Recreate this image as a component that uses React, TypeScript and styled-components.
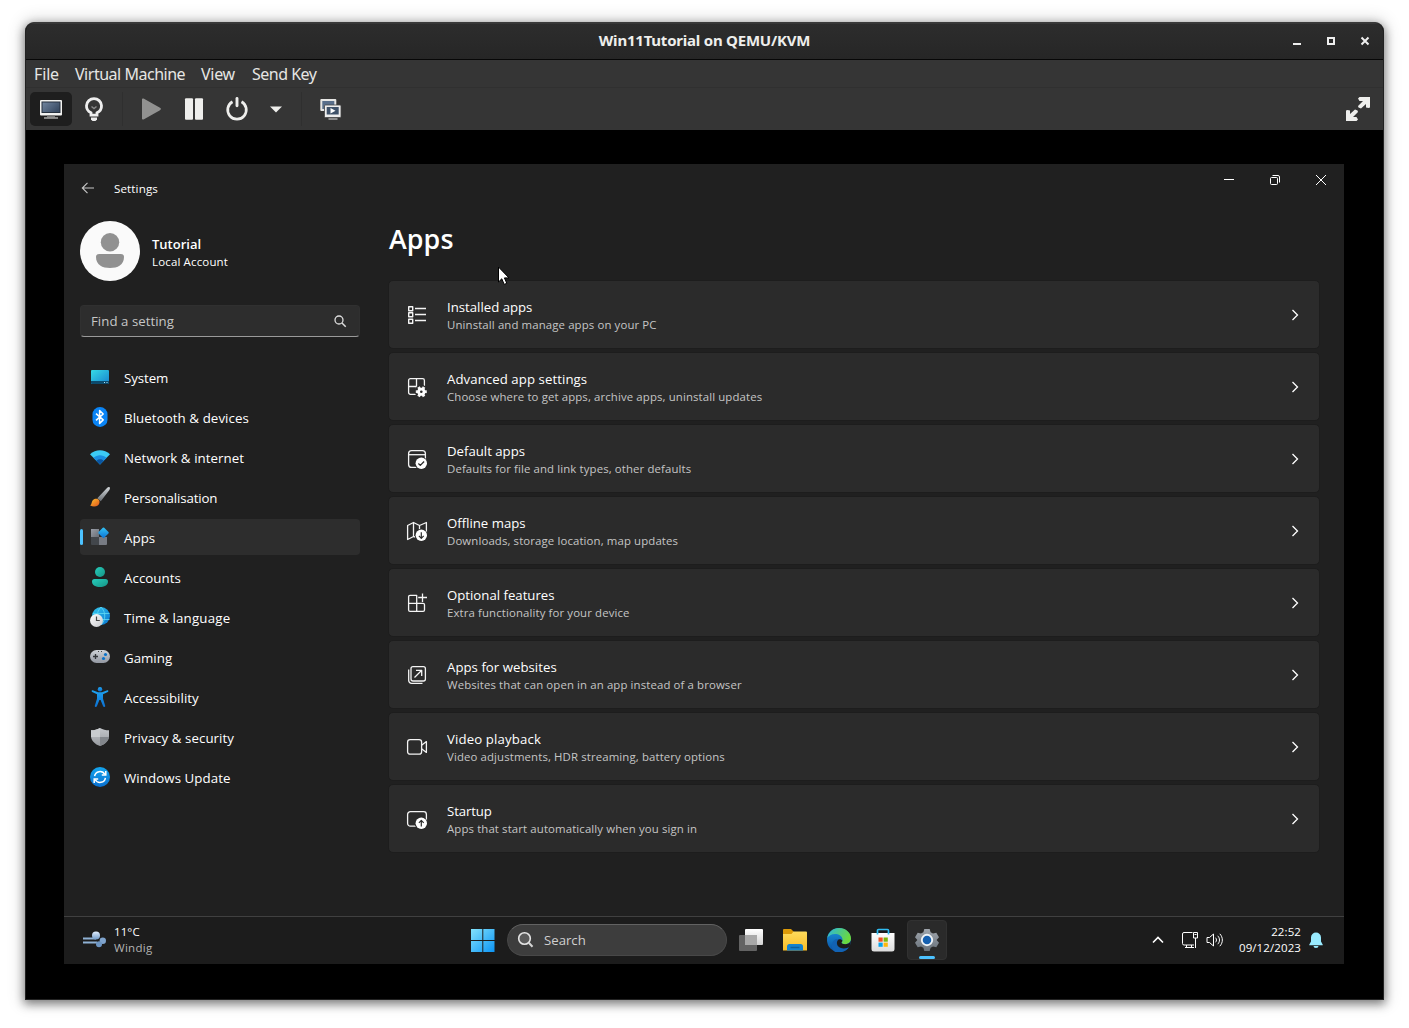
import React from 'react';
import styled, { createGlobalStyle } from 'styled-components';

const Global = createGlobalStyle`
  * { box-sizing: border-box; }
  body { margin: 0; background: #fff; overflow: hidden; font-family: 'Open Sans', 'Noto Sans', sans-serif; }
  svg { display: block; flex: none; }
`;

/* ---------- host window ---------- */
const Desktop = styled.div`
  width: 1409px; height: 1028px; padding: 22px 25px 28px; background: #fff;
`;
const HostWindow = styled.div`
  width: 1359px; height: 978px; display: flex; flex-direction: column;
  border: 1px solid #222; border-top-color: #3a3a3a; border-radius: 9px 9px 0 0;
  background: #000; overflow: hidden;
  box-shadow: 0 3px 10px 1px rgba(0,0,0,.46), 0 0 16px 4px rgba(0,0,0,.12);
`;
const TitleBar = styled.div`
  height: 37px; flex: none; display: grid; grid-template-columns: 1fr auto 1fr; align-items: center;
  background: linear-gradient(#2d2d2d, #262626); border-bottom: 1px solid #070707;
  box-shadow: inset 0 1px #383838;
`;
const HostTitle = styled.div`
  grid-column: 2; color: #eeeeec; font: 700 15px/20px 'Noto Sans', sans-serif; letter-spacing: -0.22px; padding-bottom: 2px;
`;
const HostControls = styled.div`
  display: flex; justify-content: flex-end; gap: 10px; padding-right: 6px;
`;
const MenuBar = styled.div`
  height: 28px; flex: none; display: flex; align-items: center; gap: 16px; padding-left: 8px;
  background: #353535; border-bottom: 1px solid #303030;
`;
const MenuItem = styled.span<{ $w: number; $ls: number }>`
  width: ${p => p.$w}px; white-space: nowrap; color: #e6e6e4; font: 400 16px/22px 'Noto Sans', sans-serif;
  letter-spacing: ${p => p.$ls}px;
`;
const ToolBar = styled.div`
  height: 42px; flex: none; display: flex; align-items: center; padding: 0 5px 0 4px; gap: 1px; background: #353535;
`;
const Tool = styled.div<{ $active?: boolean; $w?: number }>`
  width: ${p => p.$w ?? 42}px; height: 34px; border-radius: 5px; display: grid; place-items: center;
  background: ${p => (p.$active ? '#1e1e1e' : 'transparent')};
`;
const ToolDivider = styled.div<{ $m?: number }>`
  width: 1px; height: 34px; background: #2f2f2f; margin: 0 6px 0 ${p => p.$m ?? 6}px;
`;
const Spacer = styled.div`flex: 1;`;
const Stage = styled.div`flex: 1; padding: 34px 38px; background: #000;`;

/* ---------- guest desktop ---------- */
const Guest = styled.div`
  position: relative; width: 1280px; height: 800px; display: flex; flex-direction: column; background: #202020; color: #fff;
`;
const SettingsBar = styled.div`
  height: 48px; flex: none; display: flex; align-items: flex-start; padding-left: 16px;
`;
const BackSlot = styled.div`width: 16px; height: 48px; display: grid; place-items: center;`;
const SettingsTitle = styled.div`font-size: 11.6px; line-height: 50px; padding-left: 18px; letter-spacing: 0.12px;`;
const CaptionButton = styled.div`width: 46px; height: 32px; display: grid; place-items: center;`;
const SettingsBody = styled.div`flex: 1; display: flex; padding: 9px 24px 0 16px;`;
const Sidebar = styled.div`width: 280px; flex: none;`;
const Profile = styled.div`display: flex; align-items: center; gap: 12px; height: 60px;`;
const Name = styled.div`font-size: 13px; font-weight: 600; line-height: 19px; padding-top: 2px;`;
const Account = styled.div`font-size: 11.5px; line-height: 16px; letter-spacing: 0.15px;`;
const SearchBox = styled.div`
  height: 32px; margin: 24px 0 22px; padding: 0 12px 0 10px; display: flex; align-items: center; justify-content: space-between;
  border-radius: 4px; background: #2d2d2d; border: 1px solid #303030; border-bottom-color: #9a9a9a;
  font-size: 13.2px; color: #c6c6c6; letter-spacing: 0.06px;
`;
const Nav = styled.div`display: flex; flex-direction: column; gap: 4px;`;
const NavItem = styled.div<{ $active?: boolean }>`
  height: 36px; border-radius: 4px; display: flex; align-items: center; padding-left: 10px; gap: 14px;
  background: ${p => (p.$active ? '#2d2d2d' : 'transparent')};
  ${p => p.$active && `
    &::before { content: ''; width: 3px; height: 16px; border-radius: 2px; background: #4cc2ff; margin: 0 -7px 0 -10px; }
  `}
`;
const NavLabel = styled.span<{ $ls?: number }>`
  font-size: 13.3px; line-height: 20px; padding-top: 2px; white-space: nowrap; letter-spacing: ${p => p.$ls ?? 0}px;
`;
const NavIcon = styled.div`width: 20px; height: 20px;`;
const Content = styled.div`flex: 1; padding-left: 28px;`;
const PageTitle = styled.div`font-size: 26.8px; font-weight: 600; line-height: 36px; margin: 0 0 23px 1px; letter-spacing: 0.1px;`;
const Cards = styled.div`display: flex; flex-direction: column; gap: 3px;`;
const Card = styled.div`
  height: 69px; display: flex; align-items: center; padding: 0 18px 0 16px; border: 1px solid #1d1d1d; border-radius: 5px;
  background: #2b2b2b;
`;
const CardText = styled.div`flex: 1; padding: 2px 0 0 18px;`;
const CardTitle = styled.div<{ $ls?: number }>`font-size: 13.2px; line-height: 18px; letter-spacing: ${p => p.$ls ? `${p.$ls}px` : 'normal'};`;
const CardSub = styled.div`font-size: 11.4px; line-height: 17px; color: #c5c5c5; letter-spacing: 0.12px;`;
const Pointer = styled.div`position: absolute; left: 433px; top: 102px;`;

/* ---------- taskbar ---------- */
const TaskBar = styled.div`
  height: 48px; flex: none; display: grid; grid-template-columns: 399px auto 1fr; align-items: center;
  background: #1c1c1c; border-top: 1px solid #404040; padding-bottom: 1px;
`;
const Weather = styled.div`display: flex; align-items: center; gap: 8px; padding-left: 18px;`;
const WeatherIcon = styled.div`margin-top: -2px;`;
const WeatherText = styled.div`font-size: 11.5px; line-height: 16px; letter-spacing: 0.1px;`;
const Dim = styled.div`color: #b4b4b4; letter-spacing: 0.3px;`;
const TaskGroup = styled.div`display: flex; gap: 4px; align-items: center;`;
const TaskButton = styled.div<{ $active?: boolean }>`
  width: 40px; height: 40px; border-radius: 4px; display: flex; flex-direction: column; align-items: center; justify-content: center;
  ${p => p.$active && `
    background: #2a2a2a; border: 1px solid #313131; padding-top: 7px;
    &::after { content: ''; width: 16px; height: 3px; border-radius: 2px; background: #4cc2ff; margin-top: 4px; }
  `}
`;
const TaskSearch = styled.div`
  width: 220px; height: 32px; border-radius: 16px; display: flex; align-items: center; gap: 9px; padding-left: 9px;
  background: #3d3d3d; border: 1px solid #484848; border-top-color: #626262; color: #cfcfcf; font-size: 13.2px;
`;
const Tray = styled.div`display: flex; align-items: center; justify-content: flex-end; padding-right: 21px;`;
const TrayIcon = styled.div<{ $mr: number }>`margin-right: ${p => p.$mr}px;`;
const Clock = styled.div`text-align: right; font-size: 11.5px; line-height: 16px; letter-spacing: 0.1px;`;

/* ---------- icons ---------- */
const Box = ({ s = 20, w, h, children }: { s?: number; w?: number; h?: number; children: React.ReactNode }) => (
  <svg width={w ?? s} height={h ?? s} viewBox={`0 0 ${w ?? s} ${h ?? s}`} fill="none">{children}</svg>
);
const Grad = ({ id, a, b, x2 = 1, y2 = 1 }: { id: string; a: string; b: string; x2?: number; y2?: number }) => (
  <linearGradient id={id} x1="0" y1="0" x2={x2} y2={y2}><stop stopColor={a} /><stop offset="1" stopColor={b} /></linearGradient>
);

const navIcons: Record<string, React.ReactNode> = {
  System: <><Grad id="sy" a="#36dbe6" b="#1783cf" /><rect x="1" y="3" width="18" height="14" rx="1" fill="url(#sy)" /><path d="M1 14h18v2a1 1 0 0 1-1 1H2a1 1 0 0 1-1-1z" fill="#0c4a6c" /><path d="M14 15.5h1M16.500 15.500h1" stroke="#aee6ff" /></>,
  Bluetooth: <><rect x="2.500" width="15" height="20" rx="7.300" fill="#0a84f5" /><path d="m6 6.600 7.200 6.300-3.600 3.600V3.500l3.600 3.500L6 13.400" stroke="#fff" strokeWidth="1.500" strokeLinejoin="round" /></>,
  Network: <><path d="M0 7.300C5.500 2 14.500 2 20 7.300L10 17.500z" fill="#3ccbf4" /><path d="M3.400 10.700c3.700-3.400 9.500-3.400 13.200 0L10 17.500z" fill="#1a8fe0" /><path d="M6.300 13.700c2.200-1.900 5.200-1.900 7.400 0L10 17.500z" fill="#0b55a0" /></>,
  Personalisation: <><Grad id="p1" a="#d3d7da" b="#6b7075" x2={0} /><Grad id="p2" a="#ffc32e" b="#e0531b" /><path d="M19.600.3c.7.6.3 1.800-.4 2.900l-8.400 11.100-3.500-3.100L17 1c.9-.9 2-1.300 2.600-.7z" fill="url(#p1)" /><path d="M3 13c1.800-1.800 4.600-1.600 5.800-.2 1.300 1.600.9 4.300-1 5.700C5.600 20 2.500 20 0 18.300c2-.7 1.300-3.600 3-5.300z" fill="url(#p2)" /></>,
  Apps: <><Grad id="a1" a="#9a9fa8" b="#686c74" /><Grad id="a2" a="#34c5f5" b="#0b70d2" /><path d="M1 2h8v8H1z" fill="url(#a1)" /><path d="M1 10h8v8H2a1 1 0 0 1-1-1z" fill="#42464b" /><path d="M9 10h8v7a1 1 0 0 1-1 1H9z" fill="#777b83" /><rect x="9.500" y="1.800" width="8" height="8" rx="1" transform="rotate(45 13.500 5.800)" fill="url(#a2)" /></>,
  Accounts: <><Grad id="c1" a="#27cdbb" b="#159486" /><circle cx="10" cy="5" r="5" fill="url(#c1)" /><path d="M4.500 12h11a2.500 2.500 0 0 1 2.500 2.500C18 18.500 14 20 10 20s-8-1.500-8-5.500A2.500 2.500 0 0 1 4.500 12z" fill="url(#c1)" /></>,
  Time: <><Grad id="t1" a="#35c9ef" b="#0873cf" /><Grad id="t2" a="#fff" b="#c7c9cd" /><circle cx="11" cy="9" r="9" fill="url(#t1)" /><path d="M3 6.500h16.500M8 12.500h11.500M11 0c-5 5-5 13 0 18m0-18c5 5 5 13 0 18" stroke="#61dbf5" strokeWidth=".8" /><circle cx="6.500" cy="13.500" r="6.500" fill="url(#t2)" /><path d="M6.500 9.500v4h3.300" stroke="#444" strokeWidth="1.200" /></>,
  Gaming: <><Grad id="g1" a="#cfd3d9" b="#9297a1" x2={0} /><rect y="3" width="20" height="13" rx="6.500" fill="url(#g1)" /><path d="M5.500 7v5M3 9.500h5" stroke="#33363b" strokeWidth="1.300" /><circle cx="15.500" cy="7.500" r="1.600" fill="#0a72c9" /><circle cx="13.500" cy="11.500" r="1.600" fill="#0a72c9" /><path d="M8 4.500h1M11 4.500h1" stroke="#444" /></>,
  Accessibility: <><Grad id="ac" a="#1fa5f2" b="#0c6fd0" x2={0} /><circle cx="10" cy="2.300" r="2.200" fill="url(#ac)" /><path d="M2.700 3.200 8 5.200h4l5.300-2c1.200-.3 1.500 1.400.5 1.900L13 7.300v4.400l2.200 7c.3 1.300-1.600 1.800-2.100.6L10.600 13H9.400l-2.500 6.300c-.5 1.200-2.400.7-2.100-.6l2.200-7V7.300L2.200 5.100c-1-.5-.7-2.200.5-1.900z" fill="url(#ac)" /></>,
  Privacy: <><Grad id="s1" a="#c3c6ca" b="#989ba0" x2={0} /><path d="M10 1c2.800 1.700 5.800 2.200 9 2.300V9c0 4.700-4 8.300-9 10C5 17.300 1 13.700 1 9V3.300C4.200 3.200 7.200 2.700 10 1z" fill="url(#s1)" /><path d="M10 1v9H1V3.300C4.200 3.200 7.200 2.700 10 1z" fill="#c9cccf" /><path d="M10 10h9c-.5 4.300-4.300 7.500-9 9z" fill="#83878c" /></>,
  Update: <><Grad id="u1" a="#14a5ee" b="#0a70d0" x2={0} /><circle cx="10" cy="10" r="10" fill="url(#u1)" /><path d="M4.600 9.200c.7-5.300 7.700-6.300 10.300-1.700M15.400 10.800c-.7 5.300-7.700 6.300-10.300 1.700" stroke="#fff" strokeWidth="1.500" /><path d="M15.800 4v4h-4M4.200 16v-4h4" stroke="#fff" strokeWidth="1.500" /></>,
};

const navData: [string, string, number][] = [
  ['System', 'System', -0.1], ['Bluetooth', 'Bluetooth & devices', 0.07], ['Network', 'Network & internet', 0.06],
  ['Personalisation', 'Personalisation', -0.14], ['Apps', 'Apps', 0.05], ['Accounts', 'Accounts', 0.05],
  ['Time', 'Time & language', 0.2], ['Gaming', 'Gaming', 0], ['Accessibility', 'Accessibility', 0.04],
  ['Privacy', 'Privacy & security', 0.06], ['Update', 'Windows Update', 0.07],
];

const badge = <circle cx="16.300" cy="16.300" r="6.600" fill="#2b2b2b" stroke="none" />;
const disc = <circle cx="16.300" cy="16.300" r="5.700" fill="#fff" stroke="none" />;
const gearTeeth = [0, 60, 120].map(a => (
  <path key={a} d="M16.300 11.200v11" strokeWidth="2.800" transform={`rotate(${a + 30} 16.300 16.700)`} />
));
const cardIcons: React.ReactNode[] = [
  <><path d="M3.700 3.700h4v4h-4zM3.700 9.700h4v4h-4zM3.700 16.300h4v4h-4z" strokeWidth="1.400" /><path d="M10 5.500h11M10 11.500h11M10 17.500h11" strokeWidth="1.400" /></>,
  <><rect x="3.600" y="3.600" width="15.800" height="15.800" rx="1.800" /><path d="M11.500 3.600v8M3.600 11.500h8M11.500 11.500v8" />{badge}{gearTeeth}<circle cx="16.300" cy="16.700" r="4" fill="#fff" stroke="none" /><circle cx="16.300" cy="16.700" r="1.300" fill="#2b2b2b" stroke="none" /></>,
  <><rect x="3.600" y="3.600" width="16.800" height="16.800" rx="3" /><path d="M3.700 7.700h16.600" />{badge}{disc}<path d="m13.400 16.500 1.900 1.900 3.800-3.900" stroke="#2b2b2b" /></>,
  <><path d="m2.600 6.500 5.900-3 6 3 6.900-3V16l-6.900 3-6-1.500-5.900 3zM8.500 3.500v14M14.500 6.500v12" />{badge}{disc}<path d="M16.300 13.200v6M13.900 16.900l2.400 2.400 2.400-2.400" stroke="#2b2b2b" strokeWidth="1.200" /></>,
  <><path d="M11.700 12.300V4.300H5a1.400 1.400 0 0 0-1.400 1.400V19A1.400 1.400 0 0 0 5 20.300h13.100a1.400 1.400 0 0 0 1.400-1.400v-5.200a1.400 1.400 0 0 0-1.400-1.400zM3.600 12.300h8.100v8M17.500 2.400V11M13.200 6.500H22" /></>,
  <><rect x="6" y="3.600" width="14.400" height="14.400" rx="2" /><path d="M3.700 6.500v11a2.800 2.800 0 0 0 2.800 2.800h11M9.500 14.500l7-7M11 7.300h5.700V13" /></>,
  <><rect x="2.600" y="4.600" width="14" height="14.600" rx="2.500" /><path d="m16.600 10.200 4.800-3.600v10.800l-4.800-3.600" /></>,
  <><rect x="2.600" y="4.600" width="18.800" height="14.600" rx="2.800" />{badge}{disc}<path d="M16.300 19.500v-6M13.900 15.800l2.400-2.400 2.400 2.400" stroke="#2b2b2b" strokeWidth="1.200" /></>,
];
const cardData: [string, string, number][] = [
  ['Installed apps', 'Uninstall and manage apps on your PC', 0],
  ['Advanced app settings', 'Choose where to get apps, archive apps, uninstall updates', 0.08],
  ['Default apps', 'Defaults for file and link types, other defaults', 0],
  ['Offline maps', 'Downloads, storage location, map updates', 0],
  ['Optional features', 'Extra functionality for your device', 0],
  ['Apps for websites', 'Websites that can open in an app instead of a browser', 0.04],
  ['Video playback', 'Video adjustments, HDR streaming, battery options', 0.14],
  ['Startup', 'Apps that start automatically when you sign in', -0.1],
];

const HostChrome = () => (
  <>
    <TitleBar>
      <HostTitle>Win11Tutorial on QEMU/KVM</HostTitle>
      <HostControls>
        <Box s={24}><path d="M8 15h8" stroke="#eee" strokeWidth="2" /></Box>
        <Box s={24}><path d="M9 9h6v6H9z" stroke="#eee" strokeWidth="2" /></Box>
        <Box s={24}><path d="m8.500 8.500 7 7m0-7-7 7" stroke="#eee" strokeWidth="2" /></Box>
      </HostControls>
    </TitleBar>
    <MenuBar>
      <MenuItem $w={25} $ls={-0.15}>File</MenuItem>
      <MenuItem $w={110} $ls={-0.48}>Virtual Machine</MenuItem>
      <MenuItem $w={35} $ls={-0.3}>View</MenuItem>
      <MenuItem $w={66} $ls={-0.5}>Send Key</MenuItem>
    </MenuBar>
    <ToolBar>
      <Tool $active>
        <Box w={24} h={22}><Grad id="mon" a="#7286a0" b="#3a4c64" y2={0.6} /><rect x="1" y="2" width="22" height="15.500" rx="1" fill="#f2f2f0" /><rect x="3" y="4" width="18" height="10.500" fill="url(#mon)" stroke="#26313f" /><path d="M8 17.500h8v2H8z" fill="#777" /><path d="M5 20h14" stroke="#a9a9a7" strokeWidth="1.600" /></Box>
      </Tool>
      <Tool>
        <Box s={24}><path d="M9 18.200v-2.400c-3-1.500-4.700-3.800-4.500-7.200C4.800 4.600 8 1.700 12 1.700s7.200 2.900 7.500 6.900c.2 3.400-1.500 5.700-4.500 7.200v2.400z" stroke="#eee" strokeWidth="2.800" /><path d="m9.500 9.500 2.500 2 2.500-2" stroke="#888" strokeWidth="1.500" /><path d="M9 20.500h6v2l-1.500 1.500h-3L9 22.500z" fill="#eee" /></Box>
      </Tool>
      <ToolDivider />
      <Tool><Box s={24}><path d="M3 2.500C3 1.600 4 1.300 5 1.800l16 9c1.200.7 1.200 1.800 0 2.400l-16 9c-1 .5-2 .2-2-.7z" fill="#919190" /></Box></Tool>
      <Tool><Box s={24}><rect x="3" y="1.300" width="8" height="21.500" rx="1" fill="#eeeeec" /><rect x="13" y="1.300" width="8" height="21.500" rx="1" fill="#eeeeec" /></Box></Tool>
      <Tool><Box s={24}><path d="M7.500 4.700a9.300 9.300 0 1 0 9 0" stroke="#eeeeec" strokeWidth="2.700" /><path d="M12 1.500v7.300" stroke="#eeeeec" strokeWidth="2.900" strokeLinecap="round" /></Box></Tool>
      <Tool $w={34}><Box w={12} h={7}><path d="M0 .5h12l-6 6z" fill="#eeeeec" /></Box></Tool>
      <ToolDivider $m={7} />
      <Tool>
        <Box s={24}><rect x="2.300" y="2" width="16" height="12" rx="1" fill="#e6e6e4" /><rect x="4.300" y="4" width="12" height="8" fill="#596f8b" /><rect x="6.500" y="8" width="16.500" height="12.500" rx="1" fill="#eee" stroke="#444" strokeWidth=".8" /><rect x="8.700" y="10" width="12" height="7.500" fill="#3f5269" /><path d="m12.500 11 5 2.700-5 2.700z" fill="#fff" /><path d="M10.500 22h9" stroke="#aaa" strokeWidth="1.500" /></Box>
      </Tool>
      <Spacer />
      <Box w={40} h={24}><path d="M20 1.500 21.500 0H32v10.500L30.500 11l-2.500-.5V7l-5 4.500-2.500-1-.500-1.500 5-5h-3.500zM20 22.500 18.500 24H8V13.500l1.500-.5 2.500.5V17l5-4.500 2.500 1 .5 1.500-5 5h3.500z" fill="#eeeeec" /></Box>
    </ToolBar>
  </>
);

const Task = () => (
  <TaskBar>
    <Weather>
      <WeatherIcon><Box w={24} h={18}><Grad id="w1" a="#e3efff" b="#6f99c7" x2={0} /><path d="M1 8.500h13M1 12.500h14" stroke="#8fb1d4" strokeWidth="2" /><circle cx="14" cy="5.500" r="4" fill="url(#w1)" /><circle cx="20.800" cy="10.700" r="3.200" fill="#7fa3cc" /><circle cx="17" cy="14.300" r="3" fill="#6d95c2" /></Box></WeatherIcon>
      <WeatherText>11°C<Dim>Windig</Dim></WeatherText>
    </Weather>
    <TaskGroup>
      <TaskButton><Box s={24}><linearGradient id="win" gradientUnits="userSpaceOnUse" x1="0" y1="0" x2="24" y2="24"><stop stopColor="#86e4fb" /><stop offset="1" stopColor="#0a93f5" /></linearGradient><path d="M0 1h11.300v11H0zM12.300 1h11.200v11H12.300zM0 13h11.300v11H0zM12.300 13h11.200v11H12.300z" fill="url(#win)" /></Box></TaskButton>
      <TaskSearch><Box s={18}><circle cx="7.500" cy="7.500" r="5.800" fill="#5a5a5a" stroke="#e4e4e4" strokeWidth="1.600" /><path d="m11.800 11.800 3.700 4" stroke="#d5d5d5" strokeWidth="2" /></Box>Search</TaskSearch>
      <TaskButton><Box s={24}><Grad id="v1" a="#fff" b="#d2d2d2" x2={0} /><rect x="6" y="1" width="18" height="16" rx="1" fill="url(#v1)" /><rect y="7" width="18" height="16" rx="1" fill="#6b6b6b" fillOpacity=".9" /><path d="M6 7h12v10H6z" fill="#a8a8a8" /></Box></TaskButton>
      <TaskButton><Box s={24}><Grad id="f1" a="#ffdb5c" b="#f8bd27" x2={0} /><path d="M0 2a1 1 0 0 1 1-1h7l3 3v3H0z" fill="#dd9a08" /><path d="M0 6h8.500l2-2.500H23a1 1 0 0 1 1 1V22.500H0z" fill="url(#f1)" /><path d="M4 22.500v-4a2.500 2.500 0 0 1 2.500-2.500h11a2.500 2.500 0 0 1 2.500 2.500v4z" fill="#1382cf" /><path d="M7.500 19.500h9" stroke="#0b5f9e" strokeWidth="1.500" /></Box></TaskButton>
      <TaskButton><Box s={24}><Grad id="e1" a="#1b95dd" b="#0a4fa1" x2={0} /><Grad id="e2" a="#2bb5e0" b="#6ad93e" y2={0.4} /><circle cx="12" cy="12" r="12" fill="url(#e1)" /><path d="M.2 10C1.500 4 6 0 12 0c7 0 12 5 12 10.500 0 3.600-3 5.700-5.800 5.700-2.400 0-4-.9-3.700-1.700.4-.8 1-1.400 1-2.800C15.500 8 11.600 6 8 6 4.500 6 1.500 7.800.2 10z" fill="url(#e2)" /><path d="M8.300 24C3 21 4.500 13 8.500 11.300c1.600-.6 3 .2 3 .2-2 1.500-2.300 5 .2 7.200 2.700 2.400 7 2.600 10.500.2C19.500 23 14 25.500 8.300 24z" fill="#1262b3" /><path d="M24.100 12.500c-1.200 2.500-3.500 3.700-5.900 3.700-2.400 0-4-.9-3.700-1.700.4-.7.900-1.100.9-1.700 0-1.400-2.900-1.900-3.900-1.300-2 1.500-2.300 5 .2 7.200 2.800 2.200 7.300 2.300 10.800 0z" fill="#1c1c1c" /></Box></TaskButton>
      <TaskButton><Box s={24}><Grad id="m1" a="#fff" b="#dcdcdc" x2={0} /><path d="M6.500 6V2.500A1 1 0 0 1 7.500 1.500h9a1 1 0 0 1 1 1V6" stroke="#30bdf2" strokeWidth="1.700" /><path d="M.5 5h23v16a2.500 2.500 0 0 1-2.500 2.500H3A2.500 2.500 0 0 1 .5 21z" fill="url(#m1)" /><path d="M6.500 5v1.500M17.500 5v1.500" stroke="#30bdf2" strokeWidth="1.700" /><path d="M7.500 9.500h4.200v4.200H7.500z" fill="#f05022" /><path d="M12.600 9.500h4.200v4.200h-4.200z" fill="#7db80a" /><path d="M7.500 14.600h4.200v4.200H7.500z" fill="#05a3ee" /><path d="M12.600 14.600h4.200v4.200h-4.200z" fill="#fdb80c" /></Box></TaskButton>
      <TaskButton $active><Box s={24}><Grad id="k1" a="#a1a7ae" b="#68717a" x2={0} /><path d="m9.300.9 5.400 0 .9 3.300 2.400 1.400 3.300-.9 2.700 4.600-2.400 2.700 2.400 2.700-2.700 4.600-3.300-.9-2.400 1.400-.9 3.300H9.300l-.9-3.300L6 18.400l-3.300.9L0 14.700 2.400 12 0 9.300l2.700-4.600 3.300.9 2.400-1.400z" fill="url(#k1)" /><circle cx="12" cy="12" r="5.200" fill="#1560b0" stroke="#eef3f7" strokeWidth="1.900" /></Box></TaskButton>
    </TaskGroup>
    <Tray>
      <TrayIcon $mr={17}><Box w={12} h={8}><path d="m1 6.500 5-5 5 5" stroke="#fff" strokeWidth="1.600" /></Box></TrayIcon>
      <TrayIcon $mr={7}><Box w={18} h={18}><path d="M11.500 1.500H3A1.500 1.500 0 0 0 1.500 3v9.500A1.500 1.500 0 0 0 3 14h10M5.500 14v2.500M10.500 14v2.500M4 16.500h9" stroke="#fff" /><path d="M12.500 1.500h4V7h-4zM14.500 7v10M13.500 3.500h2" stroke="#fff" /></Box></TrayIcon>
      <TrayIcon $mr={16}><Box w={17} h={16}><path d="M1 5.500h2.500L7.500 2v12l-4-3.500H1z" stroke="#fff" strokeLinejoin="round" /><path d="M9.500 5.700c1.300 1.300 1.300 3.300 0 4.600M11.700 3.800c2.400 2.400 2.400 6 0 8.400M13.800 1.800c3.400 3.600 3.400 8.800 0 12.400" stroke="#fff" /></Box></TrayIcon>
      <Clock>22:52<br />09/12/2023</Clock>
      <TrayIcon $mr={0}><Box w={22} h={18}><path d="M15 1.500a5 5 0 0 1 5 5v4l1.700 3v.8H8.300v-.8l1.700-3v-4a5 5 0 0 1 5-5zM12.500 15h5a2.500 2 0 0 1-5 0z" fill="#99ebff" /></Box></TrayIcon>
    </Tray>
  </TaskBar>
);

export default function App() {
  return (
    <Desktop>
      <Global />
      <HostWindow>
        <HostChrome />
        <Stage>
          <Guest>
            <SettingsBar>
              <BackSlot><Box s={16}><path d="M14 8H2.500M7.500 2.800 2.300 8l5.200 5.200" stroke="#c6c6c6" strokeWidth="1.100" /></Box></BackSlot>
              <SettingsTitle>Settings</SettingsTitle>
              <Spacer />
              <CaptionButton><Box s={12}><path d="M1 5.500h10" stroke="#fff" /></Box></CaptionButton>
              <CaptionButton><Box s={12}><rect x="1.500" y="3.500" width="7" height="7" rx="1" stroke="#fff" /><path d="M3.500 1.500h5.500a1.500 1.500 0 0 1 1.500 1.500v5.500" stroke="#fff" /></Box></CaptionButton>
              <CaptionButton><Box s={12}><path d="m1 1 10 10M11 1 1 11" stroke="#fff" /></Box></CaptionButton>
            </SettingsBar>
            <SettingsBody>
              <Sidebar>
                <Profile>
                  <Box s={60}><circle cx="30" cy="30" r="30" fill="#fafafa" /><circle cx="30" cy="21.300" r="9.200" fill="#919191" /><path d="M19 33h22a3 3 0 0 1 3 3c0 8-6.500 11-14 11s-14-3-14-11a3 3 0 0 1 3-3z" fill="#919191" /></Box>
                  <div><Name>Tutorial</Name><Account>Local Account</Account></div>
                </Profile>
                <SearchBox>Find a setting<Box s={14}><circle cx="6" cy="6" r="4" stroke="#ddd" strokeWidth="1.300" /><path d="m9 9 3.700 3.700" stroke="#ddd" strokeWidth="1.500" /></Box></SearchBox>
                <Nav>
                  {navData.map(([key, label, ls]) => (
                    <NavItem key={key} $active={key === 'Apps'}>
                      <NavIcon><Box>{navIcons[key]}</Box></NavIcon>
                      <NavLabel $ls={ls}>{label}</NavLabel>
                    </NavItem>
                  ))}
                </Nav>
              </Sidebar>
              <Content>
                <PageTitle>Apps</PageTitle>
                <Cards>
                  {cardData.map(([title, sub, ls], i) => (
                    <Card key={title}>
                      <Box s={24}><g stroke="#f4f4f4" strokeWidth="1.300" strokeLinejoin="round">{cardIcons[i]}</g></Box>
                      <CardText><CardTitle $ls={ls}>{title}</CardTitle><CardSub>{sub}</CardSub></CardText>
                      <Box s={12}><path d="m3.500 1 5 5-5 5" stroke="#fff" strokeWidth="1.300" /></Box>
                    </Card>
                  ))}
                </Cards>
              </Content>
            </SettingsBody>
            <Task />
            <Pointer><Box w={14} h={20}><path d="M1.500 1v15l3.300-3.200 2.400 5.600 2.600-1.100-2.400-5.400H12z" fill="#fff" stroke="#000" /></Box></Pointer>
          </Guest>
        </Stage>
      </HostWindow>
    </Desktop>
  );
}
